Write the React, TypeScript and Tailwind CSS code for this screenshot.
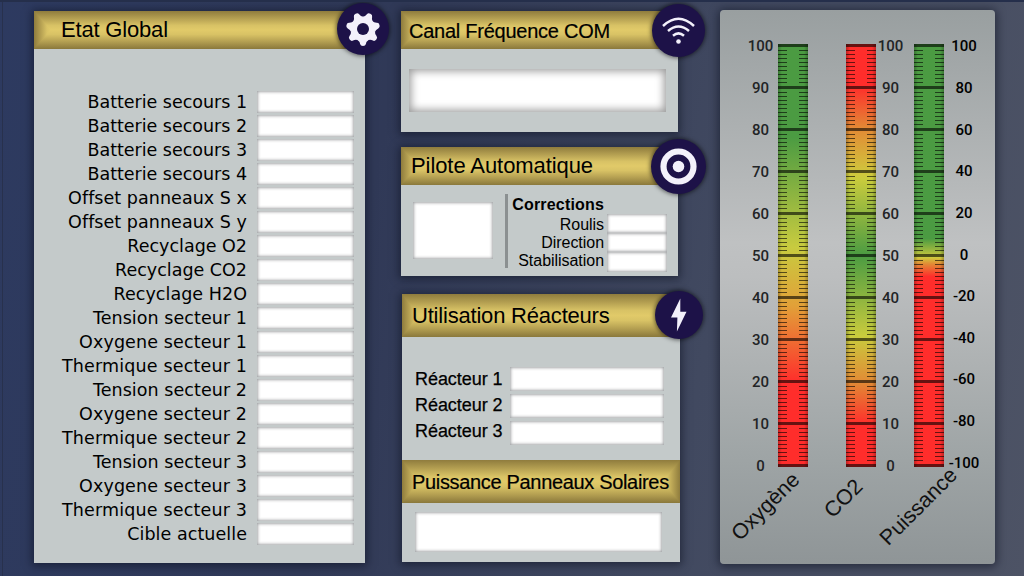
import type { ReactNode } from "react";

const ROWS: [string, string][] = [
  ["Batterie secours 1", "tracking-[-0.02px]"],
  ["Batterie secours 2", "tracking-[-0.02px]"],
  ["Batterie secours 3", "tracking-[-0.02px]"],
  ["Batterie secours 4", "tracking-[-0.02px]"],
  ["Offset panneaux S x", "tracking-[0.05px]"],
  ["Offset panneaux S y", "tracking-[0.05px]"],
  ["Recyclage O2", ""],
  ["Recyclage CO2", ""],
  ["Recyclage H2O", "tracking-[0.05px]"],
  ["Tension secteur 1", "tracking-[0.06px]"],
  ["Oxygene secteur 1", "tracking-[0.12px]"],
  ["Thermique secteur 1", "tracking-[0.16px]"],
  ["Tension secteur 2", "tracking-[0.06px]"],
  ["Oxygene secteur 2", "tracking-[0.12px]"],
  ["Thermique secteur 2", "tracking-[0.16px]"],
  ["Tension secteur 3", "tracking-[0.06px]"],
  ["Oxygene secteur 3", "tracking-[0.12px]"],
  ["Thermique secteur 3", "tracking-[0.16px]"],
  ["Cible actuelle", "tracking-[0.06px]"],
];

const PERCENT = ["100", "90", "80", "70", "60", "50", "40", "30", "20", "10", "0"];
const BALANCE = ["100", "80", "60", "40", "20", "0", "-20", "-40", "-60", "-80", "-100"];

type Stop = [number, string];
const OXYGEN: Stop[] = [[0, "#4b9b42"], [0.22, "#4b9b42"], [0.48, "#c8cb3f"], [0.62, "#e2a038"], [0.8, "#ff2d2b"], [1, "#ff2d2b"]];
const CO2: Stop[] = [[0, "#ff2d2b"], [0.1, "#ff2d2b"], [0.2, "#e28a35"], [0.31, "#cfc93d"], [0.32, "#c9cb3d"], [0.5, "#4b9b42"], [0.69, "#c9cb3d"], [0.8, "#e28a35"], [0.9, "#ff2d2b"], [1, "#ff2d2b"]];
const POWER: Stop[] = [[0, "#4b9b42"], [0.46, "#4b9b42"], [0.505, "#cfc93d"], [0.52, "#e28a35"], [0.55, "#ff2d2b"], [1, "#ff2d2b"]];

function Field({ className = "" }: { className?: string }) {
  return <div className={`bg-white shadow-[inset_0_0_3px_1px_rgba(40,45,50,0.42)] ${className}`} />;
}

function Header({ className = "", open = true, children }: { className?: string; open?: boolean; children: ReactNode }) {
  return (
    <div className={`relative flex shrink-0 items-center bg-[linear-gradient(to_bottom,#8f7c3d_0%,#b5a052_20%,#d8c265_38%,#e1ca69_50%,#d8c265_62%,#b5a052_80%,#8a783b_100%)] ${className}`}>
      <div className="absolute inset-y-0 left-0 w-[17px] bg-[linear-gradient(to_right,#8f7c3d_0%,#b5a052_40%,#d8c265_76%,#e1ca69_100%)] [clip-path:polygon(0_0,100%_50%,0_100%)]" />
      {!open && (
        <div className="absolute inset-y-0 right-0 w-[17px] bg-[linear-gradient(to_left,#8f7c3d_0%,#b5a052_40%,#d8c265_76%,#e1ca69_100%)] [clip-path:polygon(100%_0,0_50%,100%_100%)]" />
      )}
      <span className="relative whitespace-nowrap">{children}</span>
    </div>
  );
}

function Badge({ className = "", children }: { className?: string; children: ReactNode }) {
  return (
    <div className={`absolute z-10 flex items-center justify-center rounded-full bg-[#1d1248] shadow-[0_0_4px_1px_rgba(0,0,0,0.55)] ${className}`}>
      {children}
    </div>
  );
}

function GearIcon() {
  return (
    <svg width="36" height="36" viewBox="-18 -18 36 36">
      <g fill="#f3f1fb">
        {Array.from({ length: 7 }, (_, i) => (
          <path key={i} d="M-6 10.5 Q-3.2 12.5 -2.9 15 Q-2.5 17 0 17 Q2.5 17 2.9 15 Q3.2 12.5 6 10.5 Z" transform={`rotate(${(i * 360) / 7})`} />
        ))}
        <circle r="12" />
      </g>
      <circle r="6" fill="#1d1248" />
    </svg>
  );
}

function WifiIcon() {
  return (
    <svg width="36" height="30" viewBox="0 0 36 30" fill="none" stroke="#f3f1fb" strokeWidth="2.5">
      <path d="M2 10 Q17.5 -4.5 33 10" />
      <path d="M7 15 Q17.5 6 28 15" />
      <path d="M12 19.8 Q17.5 15 23 19.8" />
      <circle cx="17.5" cy="25.5" r="2.3" fill="#f3f1fb" stroke="none" />
    </svg>
  );
}

function Gauge({ id, stops }: { id: string; stops: Stop[] }) {
  return (
    <svg width="30" height="423" viewBox="0 0 30 423" shapeRendering="crispEdges" className="block shrink-0">
      <defs>
        <linearGradient id={id} x1="0" y1="0" x2="0" y2="1">
          {stops.map(([offset, color]) => (
            <stop key={offset} offset={offset} stopColor={color} />
          ))}
        </linearGradient>
        <linearGradient id={`${id}-edge`}>
          <stop offset="0" stopColor="#000" stopOpacity="0.25" />
          <stop offset="0.13" stopColor="#000" stopOpacity="0" />
          <stop offset="0.87" stopColor="#000" stopOpacity="0" />
          <stop offset="1" stopColor="#000" stopOpacity="0.25" />
        </linearGradient>
      </defs>
      <rect width="30" height="423" fill={`url(#${id})`} />
      <rect width="30" height="423" fill={`url(#${id}-edge)`} />
      <g fill="#000" fillOpacity="0.6">
        {Array.from({ length: 11 }, (_, i) => (
          <rect key={i} y={i * 42} width="30" height="3" />
        ))}
        {Array.from({ length: 90 }, (_, i) => {
          const y = Math.floor(i / 9) * 42 + 6 + (i % 9) * 4;
          return <path key={i} d={`M0 ${y}h9v1h-9zM21 ${y}h9v1h-9z`} />;
        })}
      </g>
    </svg>
  );
}

function Scale({ labels, className = "" }: { labels: string[]; className?: string }) {
  return (
    <div className={`flex shrink-0 flex-col items-center font-['Roboto',sans-serif] font-medium ${className}`}>
      {labels.map((label) => (
        <div key={label} className="flex flex-1 items-center whitespace-nowrap text-[15px] leading-none">
          {label}
        </div>
      ))}
    </div>
  );
}

const PANEL = "relative flex flex-col bg-[#c4caca] shadow-[0_1px_8px_2px_rgba(8,12,25,0.5)]";

export default function App() {
  return (
    <div className="flex h-[576px] w-[1024px] items-start overflow-hidden border-t-2 border-[#252f4b] bg-[linear-gradient(100deg,#2d3a60_0%,#303957_36%,#414960_68%,#4d5365_100%)] font-['Liberation_Sans',Arial,sans-serif] text-black">
      <div className="mr-[31px] h-full w-[3px] shrink-0 border-r border-[#28314d]" />
      <section className={`${PANEL} mt-[9px] h-[552px] w-[331px] shrink-0`}>
        <Header className="h-[38px] pb-[2px] pl-[27px] text-[22px] tracking-[-0.18px]">Etat Global</Header>
        <Badge className="-top-2 left-[303px] size-[52px]"><GearIcon /></Badge>
        <div className="mt-[41px] flex flex-col pr-[11px]">
          {ROWS.map(([row, tracking]) => (
            <div key={row} className="flex h-6 items-start justify-end gap-[10px]">
              <span className={`whitespace-nowrap font-['DejaVu_Sans',sans-serif] text-[17.5px] leading-6 ${tracking}`}>{row}</span>
              <Field className="mt-px h-[22px] w-[97px]" />
            </div>
          ))}
        </div>
      </section>

      <div className="ml-9 flex w-[279px] shrink-0 flex-col pt-[9px]">
        <section className={`${PANEL} h-[121px] w-[277px]`}>
          <Header className="h-[38px] pl-2 pt-px text-[20px] tracking-[-0.25px] [-webkit-text-stroke:0.2px_black]">Canal Fréquence COM</Header>
          <Badge className="-top-[7px] left-[251px] size-[53px]"><WifiIcon /></Badge>
          <div className="ml-2 mt-5 h-[43px] w-[257px] bg-white shadow-[inset_0_0_9px_2px_rgba(0,0,0,0.4)]" />
        </section>

        <section className={`${PANEL} mt-[15px] h-[129px] w-[277px]`}>
          <Header className="h-[38px] pb-[2px] pl-[10px] text-[22px] tracking-[-0.08px]">Pilote Automatique</Header>
          <Badge className="-top-2 left-[250px] size-[55px]">
            <svg width="38" height="38" viewBox="-18.5 -18.5 38 38">
              <circle r="15" fill="none" stroke="#f3f1fb" strokeWidth="6.2" />
              <circle r="5.8" fill="#f3f1fb" />
            </svg>
          </Badge>
          <div className="flex pl-3 pt-[9px]">
            <Field className="mt-2 h-[57px] w-20" />
            <div className="ml-3 h-[74px] w-[3px] bg-[#8b9091]" />
            <div className="ml-[3px] w-[93px] pt-[2px] text-right text-[16px] leading-[18px] tracking-[-0.04px]">
              <div className="mb-[2px] whitespace-nowrap font-bold tracking-[0.18px]">Corrections</div>
              <div>Roulis</div>
              <div>Direction</div>
              <div>Stabilisation</div>
            </div>
            <div className="ml-[3px] flex flex-col pt-5">
              <Field className="h-[19px] w-[60px]" />
              <Field className="h-[19px] w-[60px]" />
              <Field className="h-5 w-[60px]" />
            </div>
          </div>
        </section>

        <section className={`${PANEL} ml-px mt-[18px] h-[268px] w-[278px]`}>
          <Header className="h-[43px] pl-[10px] text-[22px] tracking-[-0.2px]">Utilisation Réacteurs</Header>
          <Badge className="-top-[3px] left-[253px] size-12">
            <svg width="20" height="36" viewBox="0 0 20 36">
              <path d="M11.3 1.5 2 20.5h6.4L7.9 34.5 17.5 14.8h-6.2z" fill="#f3f1fb" />
            </svg>
          </Badge>
          <div className="flex h-[123px] pl-[13px] pt-[30px]">
            <div className="flex w-[95px] flex-col">
              {["Réacteur 1", "Réacteur 2", "Réacteur 3"].map((name) => (
                <span key={name} className="h-[26px] whitespace-nowrap text-[18px] leading-6 tracking-[-0.05px] [-webkit-text-stroke:0.25px_black]">{name}</span>
              ))}
            </div>
            <div className="flex flex-col gap-[3px]">
              <Field className="h-6 w-[154px]" />
              <Field className="h-6 w-[154px]" />
              <Field className="h-6 w-[154px]" />
            </div>
          </div>
          <Header open={false} className="h-[43px] pl-[10px] text-[20px] tracking-[-0.33px] [-webkit-text-stroke:0.2px_black]">Puissance Panneaux Solaires</Header>
          <Field className="ml-[13px] mt-[9px] h-10 w-[247px]" />
        </section>
      </div>

      <section className="ml-10 mt-2 flex h-[554px] w-[275px] shrink-0 flex-col rounded bg-[linear-gradient(to_bottom,#999fa0_0%,#bfc1c2_42%,#bcbebf_48%,#9fa5a6_80%,#8f9597_100%)] shadow-[0_1px_8px_2px_rgba(8,12,25,0.5)]">
        <div className="flex h-[457px] items-start pt-[34px]">
          <Scale labels={PERCENT} className="-mt-[19px] ml-[23px] h-[462px] w-[35px] text-[#222426]" />
          <Gauge id="oxygen" stops={OXYGEN} />
          <div className="w-[38px]" />
          <Gauge id="co2" stops={CO2} />
          <Scale labels={PERCENT} className="-mt-[19px] h-[462px] w-[29px] text-[#222426]" />
          <div className="w-[9px]" />
          <Gauge id="power" stops={POWER} />
          <Scale labels={BALANCE} className="-mt-[18px] h-[458px] w-[40px]" />
        </div>
        <div className="relative h-[97px] text-[21.5px] leading-none text-[#111]">
          <span className="absolute left-[46px] top-[40px] -translate-x-1/2 -translate-y-1/2 -rotate-45">Oxygène</span>
          <span className="absolute left-[124px] top-[32px] -translate-x-1/2 -translate-y-1/2 -rotate-45">CO2</span>
          <span className="absolute left-[199px] top-[40px] -translate-x-1/2 -translate-y-1/2 -rotate-45">Puissance</span>
        </div>
      </section>
    </div>
  );
}
